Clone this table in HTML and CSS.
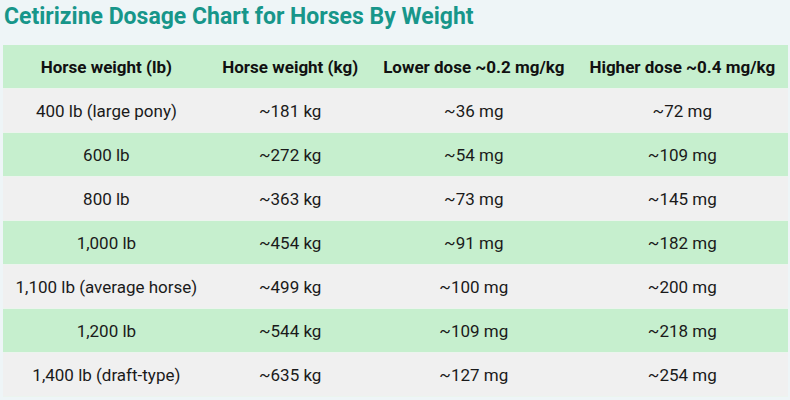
FILE: index.html
```html
<!DOCTYPE html>
<html>
<head>
<meta charset="utf-8">
<link rel="stylesheet" href="styles.css">
</head>
<body>
<h2 class="title">Cetirizine Dosage Chart for Horses By Weight</h2>
<table class="chart">
  <thead>
    <tr><th>Horse weight (lb)</th><th>Horse weight (kg)</th><th>Lower dose ~0.2 mg/kg</th><th>Higher dose ~0.4 mg/kg</th></tr>
  </thead>
  <tbody>
    <tr><td>400 lb (large pony)</td><td>~181 kg</td><td>~36 mg</td><td>~72 mg</td></tr>
    <tr><td>600 lb</td><td>~272 kg</td><td>~54 mg</td><td>~109 mg</td></tr>
    <tr><td>800 lb</td><td>~363 kg</td><td>~73 mg</td><td>~145 mg</td></tr>
    <tr><td>1,000 lb</td><td>~454 kg</td><td>~91 mg</td><td>~182 mg</td></tr>
    <tr><td>1,100 lb (average horse)</td><td>~499 kg</td><td>~100 mg</td><td>~200 mg</td></tr>
    <tr><td>1,200 lb</td><td>~544 kg</td><td>~109 mg</td><td>~218 mg</td></tr>
    <tr><td>1,400 lb (draft-type)</td><td>~635 kg</td><td>~127 mg</td><td>~254 mg</td></tr>
  </tbody>
</table>
</body>
</html>
```
FILE: styles.css
```css
html, body {
  margin: 0;
  padding: 0;
  background: #eef5f7;
  font-family: Roboto, "Liberation Sans", sans-serif;
  overflow: hidden;
}
body {
  padding: 3px 0 0 3px;
  height: 397px;
}
.title {
  margin: 0 0 14px 1px;
  font-size: 23px;
  line-height: 28px;
  font-weight: 700;
  color: #17968a;
  white-space: nowrap;
}
.chart {
  border-collapse: collapse;
  font-size: 17px;
  color: #1a1a1a;
}
.chart th, .chart td {
  height: 43px;
  padding: 0 12.5px;
  text-align: center;
  white-space: nowrap;
  border-bottom: 1px solid #ecf4ee;
}
.chart th {
  font-weight: 700;
  background: #c6efce;
  color: #111;
}
.chart tbody tr:nth-child(odd) td {
  background: #f0f0f0;
}
.chart tbody tr:nth-child(even) td {
  background: #c6efce;
}
```
